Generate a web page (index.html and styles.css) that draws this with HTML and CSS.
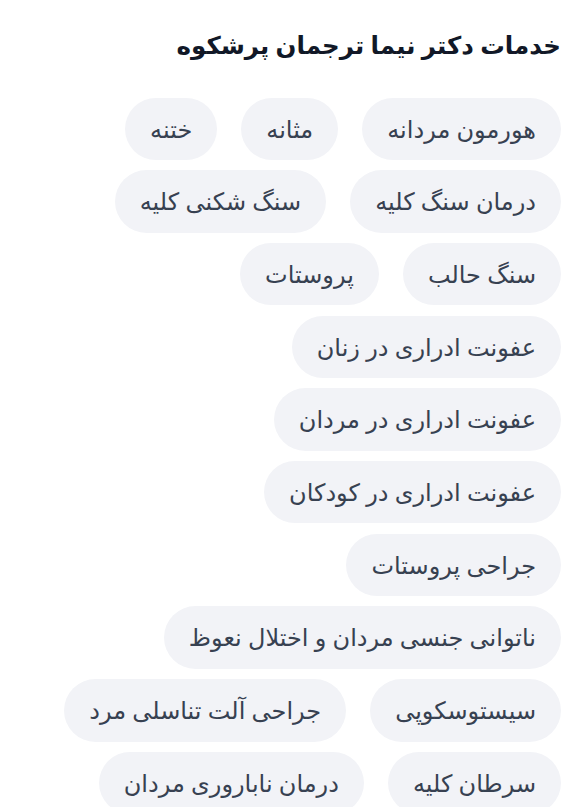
FILE: index.html
```html
<!DOCTYPE html>
<html lang="fa" dir="rtl">

<head>
    <meta charset="UTF-8">
    <meta name="viewport" content="width=device-width, initial-scale=1.0">
    <title>خدمات دکتر نیما ترجمان پرشکوه</title>
    <link rel="stylesheet" href="styles.css">
</head>

<body>
    <div class="services">
        <h2 class="services-title">خدمات دکتر نیما ترجمان پرشکوه</h2>
        <div class="tag-list">
            <span class="tag">هورمون مردانه</span>
            <span class="tag">مثانه</span>
            <span class="tag">ختنه</span>
            <span class="tag">درمان سنگ کلیه</span>
            <span class="tag">سنگ شکنی کلیه</span>
            <span class="tag">سنگ حالب</span>
            <span class="tag">پروستات</span>
            <span class="tag">عفونت ادراری در زنان</span>
            <span class="tag">عفونت ادراری در مردان</span>
            <span class="tag">عفونت ادراری در کودکان</span>
            <span class="tag">جراحی پروستات</span>
            <span class="tag">ناتوانی جنسی مردان و اختلال نعوظ</span>
            <span class="tag">سیستوسکوپی</span>
            <span class="tag">جراحی آلت تناسلی مرد</span>
            <span class="tag">سرطان کلیه</span>
            <span class="tag">درمان ناباروری مردان</span>
        </div>
    </div>
</body>

</html>
```

FILE: styles.css
```css
body {
    margin: 0;
    background: #fff;
    font-family: "Noto Sans", "DejaVu Sans", sans-serif;
}

.services {
    padding: 26px 21px 0 50px;
}

.services-title {
    margin: 0 0 33.5px;
    font-size: 24.5px;
    font-weight: 700;
    line-height: 38px;
    color: #111827;
}

.tag-list {
    display: flex;
    flex-wrap: wrap;
    gap: 10.2px 24px;
}

.tag {
    display: inline-block;
    padding: 0 25px;
    height: 62.5px;
    line-height: 62.5px;
    border-radius: 32px;
    background: #f2f3f7;
    color: #374151;
    font-size: 24px;
    white-space: nowrap;
}
```
